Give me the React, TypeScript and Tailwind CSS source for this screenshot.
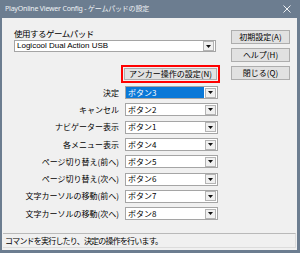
import React from 'react';

const jp = { fontFamily: '"Noto Sans CJK JP", "Noto Sans", sans-serif' };

const rows: { label: string; value: string; active?: boolean }[] = [
  { label: '決定', value: 'ボタン3', active: true },
  { label: 'キャンセル', value: 'ボタン2' },
  { label: 'ナビゲーター表示', value: 'ボタン1' },
  { label: '各メニュー表示', value: 'ボタン4' },
  { label: 'ページ切り替え(前へ)', value: 'ボタン5' },
  { label: 'ページ切り替え(次へ)', value: 'ボタン6' },
  { label: '文字カーソルの移動(前へ)', value: 'ボタン7' },
  { label: '文字カーソルの移動(次へ)', value: 'ボタン8' },
];

const Arrow = () => (
  <div className="w-[11px] h-[10px] mr-[1px] bg-[#f0f0f0] border border-[#b4b4b4] flex items-center justify-center shrink-0">
    <svg width="5" height="3" viewBox="0 0 5 3">
      <path d="M0 0h5L2.5 3z" fill="#111" />
    </svg>
  </div>
);

const Combo = ({ value, active, className }: { value: string; active?: boolean; className?: string }) => (
  <div className={`h-[13px] bg-white border border-[#a5a5a5] flex items-center ${className ?? ''}`}>
    <div className={`flex-1 h-full flex items-center pl-[2px] text-[8px] leading-none ${active ? 'bg-[#0a78d7] text-white mr-[1px] my-[1px]' : 'text-black'}`}>
      {value}
    </div>
    <Arrow />
  </div>
);

const SideButton = ({ children }: { children: React.ReactNode }) => (
  <button className="w-[59px] h-[14px] bg-[#e1e1e1] border border-[#adadad] text-[8px] leading-none text-black flex items-center justify-center">
    {children}
  </button>
);

export default function App() {
  return (
    <div className="w-[300px] h-[253px] bg-[#6c7d90] flex flex-col pl-[2px] pr-[3px] pb-[3px]" style={jp}>
      {/* Title bar */}
      <div className="h-[18px] flex items-center justify-between pl-[3px] pr-[6px] text-[7px] tracking-[-0.2px] text-[#eef1f4]">
        <span style={{ fontFamily: '"Noto Sans", "Noto Sans CJK JP", sans-serif' }}>
          PlayOnline Viewer Config - ゲームパッドの設定
        </span>
        <svg width="8" height="8" viewBox="0 0 8 8">
          <path d="M0.5 0.5l7 7M7.5 0.5l-7 7" stroke="#eef1f4" strokeWidth="1" />
        </svg>
      </div>

      {/* Body */}
      <div className="flex-1 bg-[#f0f0f0] flex flex-col">
        <div className="flex-1 flex">
          {/* Left column */}
          <div className="w-[218px] pl-[12px] pt-[9px] flex flex-col">
            <div className="h-[12px] text-[8.5px] tracking-[-0.5px] leading-none flex items-center text-black">使用するゲームパッド</div>
            <div className="mt-[1px] w-[202px] h-[12px] bg-white border border-[#a5a5a5] flex items-center">
              <div className="flex-1 pl-[2px] text-[8px] leading-none text-black" style={{ fontFamily: '"Liberation Sans", Arial, sans-serif' }}>
                Logicool Dual Action USB
              </div>
              <Arrow />
            </div>

            <div className="mt-[13px] flex justify-end">
              <div className="w-[99px] h-[18px] border-2 border-[#ff0000] p-[1px]">
                <button className="w-full h-full bg-[#e1e1e1] border border-[#adadad] text-[8px] leading-none text-black flex items-center justify-center">
                  アンカー操作の設定(N)
                </button>
              </div>
            </div>

            <div className="mt-[1px] flex flex-col">
              {rows.map((r) => (
                <div key={r.label} className="h-[17.3px] flex items-center">
                  <div className="w-[111px] text-right text-[8px] leading-none text-black pr-[6px] whitespace-nowrap">{r.label}</div>
                  <Combo value={r.value} active={r.active} className="w-[93px]" />
                </div>
              ))}
            </div>
          </div>

          {/* Right column */}
          <div className="flex-1 flex flex-col items-end pr-[7px] pt-[12px] gap-[4px]">
            <SideButton>初期設定(A)</SideButton>
            <SideButton>ヘルプ(H)</SideButton>
            <SideButton>閉じる(Q)</SideButton>
          </div>
        </div>

        {/* Status bar */}
        <div className="mx-[1px] mb-[2px] h-[15px] border-t border-[#b9b9b9] border-r border-r-[#dcdcdc] border-b border-b-[#dcdcdc] flex items-center pl-[2px] text-[8px] tracking-[-0.8px] leading-none text-black">
          コマンドを実行したり、決定の操作を行います。
        </div>
      </div>
    </div>
  );
}
